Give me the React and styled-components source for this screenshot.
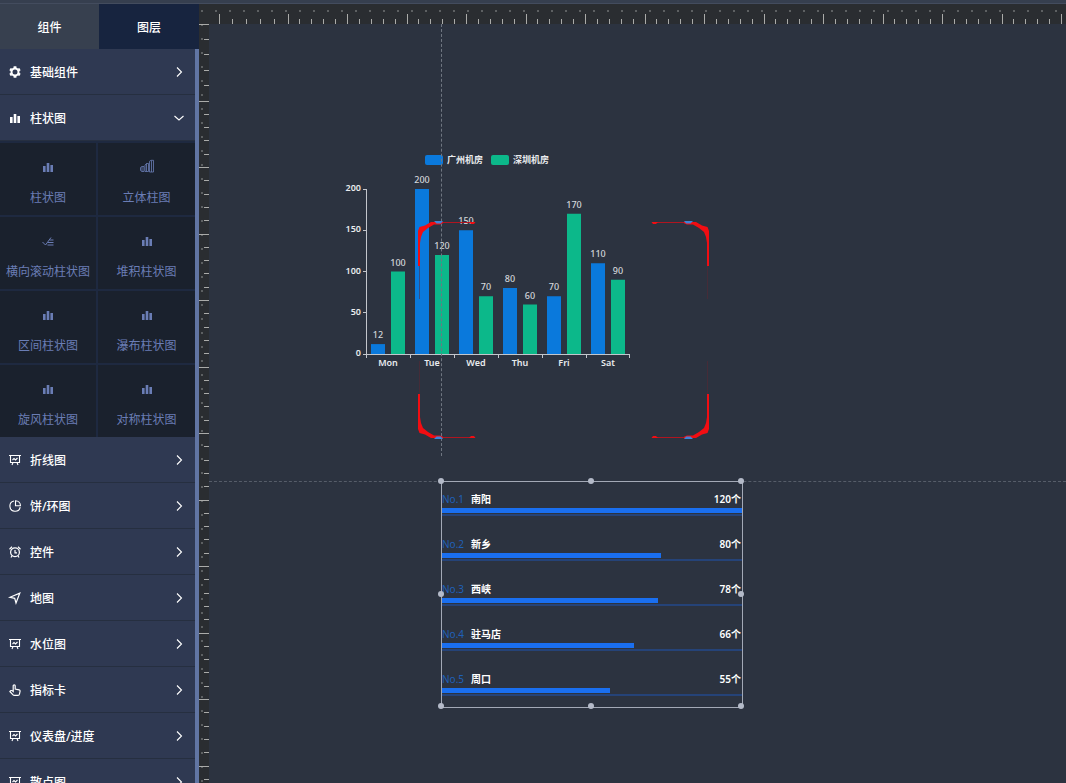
import React, { useState } from 'react';
import styled, { createGlobalStyle } from 'styled-components';

const menus = [
  { name: '基础组件', icon: 'gear' },
  {
    name: '柱状图',
    icon: 'bars',
    children: [
      { name: '柱状图', icon: 'bars' },
      { name: '立体柱图', icon: 'solid' },
      { name: '横向滚动柱状图', icon: 'scroll' },
      { name: '堆积柱状图', icon: 'bars' },
      { name: '区间柱状图', icon: 'bars' },
      { name: '瀑布柱状图', icon: 'bars' },
      { name: '旋风柱状图', icon: 'bars' },
      { name: '对称柱状图', icon: 'bars' },
    ],
  },
  { name: '折线图', icon: 'board' },
  { name: '饼/环图', icon: 'pie' },
  { name: '控件', icon: 'clock' },
  { name: '地图', icon: 'position' },
  { name: '水位图', icon: 'board' },
  { name: '指标卡', icon: 'pointer' },
  { name: '仪表盘/进度', icon: 'board' },
  { name: '散点图', icon: 'board' },
];

const rooms = [
  { day: 'Mon', gz: 12, sz: 100 },
  { day: 'Tue', gz: 200, sz: 120 },
  { day: 'Wed', gz: 150, sz: 70 },
  { day: 'Thu', gz: 80, sz: 60 },
  { day: 'Fri', gz: 70, sz: 170 },
  { day: 'Sat', gz: 110, sz: 90 },
];

const ranks = [
  { city: '南阳', value: 120, percent: 100 },
  { city: '新乡', value: 80, percent: 73 },
  { city: '西峡', value: 78, percent: 72 },
  { city: '驻马店', value: 66, percent: 64 },
  { city: '周口', value: 55, percent: 56 },
];

const handles = ['0% 0%', '50% 0%', '100% 0%', '0% 50%', '100% 50%', '0% 100%', '50% 100%', '100% 100%'];

const shapes = {
  gear: (
    <>
      <circle cx="6" cy="6" r="3.5" fill="none" stroke="currentColor" strokeWidth="2" />
      <path
        d="M6 0.2v2M6 9.800v2M1 3.100l1.600.9M9.400 8l1.600.9M1 8.900l1.600-.9M9.400 4l1.600-.9"
        stroke="currentColor"
        strokeWidth="2.800"
      />
    </>
  ),
  bars: <path d="M1 5h2.6v6H1zM4.7 2h2.6v9H4.7zM8.4 4h2.6v7H8.4z" fill="currentColor" />,
  solid: (
    <g fill="none" stroke="currentColor" strokeWidth="0.8">
      <path d="M-0.5 6.500l1.500-1h2v5h-2l-1.500-1zM1 5.500v5M4 4l1.500-1.500h2v8H4zM5.500 2.500v8M8.500 0.300l1.500-1h2.500v11.700h-4zM10.500 -.5v11.500" />
    </g>
  ),
  scroll: (
    <path d="M0.500 7l3 3L9 2.500M7.500 5h4M6 7.500h5.500M5.500 10h6" fill="none" stroke="currentColor" />
  ),
  board: (
    <path
      d="M0 1.500h12M1.500 1.500v7h9v-7M3.500 6l1.500-1.500 1.500 1.500L8.500 4M4 8.500L3 11M8 8.500L9 11"
      fill="none"
      stroke="currentColor"
      strokeWidth="1.1"
    />
  ),
  pie: (
    <path
      d="M5 1a5.200 5.200 0 1 0 6.200 6.200M6.500 0.700v5h5A5.200 5.200 0 0 0 6.500 0.700z"
      fill="none"
      stroke="currentColor"
      strokeWidth="1.1"
    />
  ),
  clock: (
    <g fill="none" stroke="currentColor" strokeWidth="1.2">
      <circle cx="6" cy="6.300" r="4.400" />
      <path d="M6 4v2.800h2M0.500 3.200L3 .8M11.500 3.200L9 .8M3 9.800l-1 1.700M9 9.800l1 1.700" />
    </g>
  ),
  position: (
    <path d="M1 5.300L10.800 1.200 7 11 5.700 6.300z" fill="none" stroke="currentColor" strokeWidth="1.2" />
  ),
  pointer: (
    <path
      d="M4.200 7.500V1.800a1 1 0 0 1 2 0V5l4 .8c.8.200 1 .6.900 1.300L10.500 10c-.2 1-.6 1.400-1.500 1.400H5.500c-.8 0-1.200-.2-1.700-.8L.9 7.500c.5-1.200 1.700-1.200 2.400-.7z"
      fill="none"
      stroke="currentColor"
      strokeWidth="1.2"
    />
  ),
};

function Icon({ name }) {
  return (
    <svg width="12" height="12" viewBox="0 0 12 12" overflow="visible" aria-hidden="true">
      {shapes[name]}
    </svg>
  );
}

function Chevron({ open }) {
  return (
    <svg width="12" height="12" viewBox="0 0 12 12" fill="none" stroke="currentColor" strokeWidth="1.1" aria-hidden="true">
      <path d={open ? 'M1.500 4L6 8 10.500 4' : 'M4 1.500L8.500 6 4 10.500'} />
    </svg>
  );
}

// the first mark of each ruler is a little wider than the others
function rulerTicks(start, first, step, count) {
  const ticks = [];
  for (let i = 0; i < count; i += 1) {
    const from = i === 0 ? start : start + first + (i - 1) * step;
    const gap = (i === 0 ? first : step) / 5;
    for (let j = 0; j < 5; j += 1) {
      ticks.push({ at: Math.floor(from + j * gap), major: j === 0 });
    }
  }
  return ticks;
}

const topTicks = rulerTicks(20, 69, 59.5, 40);
const sideTicks = rulerTicks(0, 77, 66.5, 30);
const dots = Array.from({ length: 160 }, (_, i) => i * 14);

function TopScale() {
  return (
    <svg width="100%" height="20" aria-hidden="true">
      {dots.map((d) => <rect key={d} x={d + 2} y="6" width="2" height="2" fill="#5d6062" />)}
      {topTicks.map((t) => (
        <rect key={t.at} x={t.at} y={t.major ? 10 : 15} width="1" height={t.major ? 10 : 5} fill="#aaaba9" />
      ))}
    </svg>
  );
}

function SideScale() {
  return (
    <svg width="10" height="100%" aria-hidden="true">
      {dots.map((d) => <rect key={d} x="2" y={d} width="2" height="2" fill="#5d6062" />)}
      {sideTicks.map((t) => (
        <rect key={t.at} x={t.major ? 0 : 5} y={t.at} width={t.major ? 10 : 5} height="1" fill="#aaaba9" />
      ))}
    </svg>
  );
}

function BarChart() {
  const base = 205;
  const left = 27;
  const step = 44;
  const height = (v) => v * 0.825;
  return (
    <ChartSvg width="300" height="224" role="img" aria-label="机房柱状图">
      <rect x="86" y="6" width="18" height="10" rx="2" fill="#0a79dc" />
      <ChartText x="108" y="14" $bold>广州机房</ChartText>
      <rect x="152" y="6" width="18" height="10" rx="2" fill="#0cb88a" />
      <ChartText x="174" y="14" $bold>深圳机房</ChartText>
      {rooms.map((r, i) => {
        const x = left + i * step;
        return (
          <g key={r.day}>
            <rect x={x + 5} y={base - height(r.gz)} width="14" height={height(r.gz)} fill="#0a79dc" />
            <rect x={x + 25} y={base - height(r.sz)} width="14" height={height(r.sz)} fill="#0cb88a" />
            <ChartText x={x + 12} y={base - height(r.gz) - 6} textAnchor="middle">{r.gz}</ChartText>
            <ChartText x={x + 32} y={base - height(r.sz) - 6} textAnchor="middle">{r.sz}</ChartText>
            <ChartText x={x + 22} y={base + 12} textAnchor="middle" $bold>{r.day}</ChartText>
          </g>
        );
      })}
      {[0, 50, 100, 150, 200].map((v) => (
        <g key={v}>
          <rect x={left - 3} y={Math.floor(base - height(v))} width="3" height="1" fill="#c3c6cc" />
          <ChartText x={left - 5} y={base - height(v) + 2} textAnchor="end" $bold>{v}</ChartText>
        </g>
      ))}
      <path d="M27.500 40V205.500H291" fill="none" stroke="#c3c6cc" />
      {[0, 1, 2, 3, 4, 5, 6].map((i) => (
        <rect key={i} x={left + i * step - (i === 6 ? 1 : 0)} y={base} width="1" height="4" fill="#c3c6cc" />
      ))}
    </ChartSvg>
  );
}

function Corner({ transform }) {
  return (
    <g transform={transform}>
      <path d="M0 45V10L1.500 6 7 4.500 13 1H19L25 0.800V2.200L22 3.500H16L10 7 5 11 3 16 2 22V45z" fill="#f20d12" />
      <path d="M25 1.500H57" stroke="#b01520" />
      <path d="M51 1H57.500L56 3H53z" fill="#f20d12" />
      <path d="M16 0H25L23 2.500H18.500z" fill="#3f83d8" />
      <path d="M1.500 45V78" stroke="#5e2630" strokeWidth="0.500" />
    </g>
  );
}

function CornerFrame() {
  return (
    <FrameSvg width="291" height="218" aria-hidden="true">
      <Corner />
      <Corner transform="translate(291 0) scale(-1 1)" />
      <Corner transform="translate(0 218) scale(1 -1)" />
      <Corner transform="translate(291 218) scale(-1 -1)" />
    </FrameSvg>
  );
}

function RankList() {
  return (
    <RankBox>
      <Ranks>
        {ranks.map((r, i) => (
          <Rank key={r.city}>
            <RankLine>
              <RankNo>No.{i + 1}</RankNo>
              <RankCity>{r.city}</RankCity>
              <RankValue>{r.value}个</RankValue>
            </RankLine>
            <RankTrack>
              <RankBar style={{ width: `${r.percent}%` }} />
            </RankTrack>
          </Rank>
        ))}
      </Ranks>
      {handles.map((h) => {
        const [x, y] = h.split(' ');
        return <Handle key={h} style={{ left: x, top: y }} />;
      })}
    </RankBox>
  );
}

export default function App() {
  const [tab, setTab] = useState('组件');
  const [opened, setOpened] = useState('柱状图');

  return (
    <Page>
      <GlobalStyle />
      <TopStrip />
      <Main>
        <Sidebar>
          <Tabs>
            {['组件', '图层'].map((t) => (
              <Tab key={t} type="button" $active={tab === t} onClick={() => setTab(t)}>{t}</Tab>
            ))}
          </Tabs>
          <MenuScroll>
            {menus.map((m) => (
              <React.Fragment key={m.name}>
                <MenuItem
                  type="button"
                  aria-expanded={opened === m.name}
                  onClick={() => setOpened(opened === m.name ? '' : m.name)}
                >
                  <Icon name={m.icon} />
                  <MenuName>{m.name}</MenuName>
                  <Chevron open={opened === m.name} />
                </MenuItem>
                {m.children && opened === m.name && (
                  <CellGrid>
                    {m.children.map((c) => (
                      <Cell key={c.name} type="button">
                        <Icon name={c.icon} />
                        <span>{c.name}</span>
                      </Cell>
                    ))}
                  </CellGrid>
                )}
              </React.Fragment>
            ))}
          </MenuScroll>
        </Sidebar>
        <Editor>
          <TopRuler><TopScale /></TopRuler>
          <SideRuler><SideScale /></SideRuler>
          <Canvas>
            <BarChart />
            <GuideX />
            <GuideY />
            <CornerFrame />
            <RankList />
          </Canvas>
        </Editor>
      </Main>
    </Page>
  );
}

const GlobalStyle = createGlobalStyle`
  * {
    box-sizing: border-box;
  }
  body {
    margin: 0;
    overflow: hidden;
    background: #2c3340;
    font-family: 'Noto Sans', 'Noto Sans CJK SC', sans-serif;
    font-size: 12px;
    color: #ffffff;
  }
  button {
    border: 0;
    padding: 0;
    font: inherit;
    color: inherit;
    cursor: pointer;
  }
  svg {
    display: block;
    flex-shrink: 0;
  }
`;
const Page = styled.div`
  display: flex;
  flex-direction: column;
  height: 100vh;
`;
const TopStrip = styled.header`
  height: 4px;
  flex-shrink: 0;
  background: #363f4f;
  border-bottom: 1px solid #434c5e;
`;
const Main = styled.main`
  display: flex;
  flex: 1;
  min-height: 0;
`;
const Sidebar = styled.aside`
  display: flex;
  flex-direction: column;
  width: 199px;
  flex-shrink: 0;
`;
const Tabs = styled.div`
  display: grid;
  grid-template-columns: 99px 1fr;
  height: 45px;
  flex-shrink: 0;
`;
const Tab = styled.button`
  background: ${({ $active }) => ($active ? '#37404f' : '#17243f')};
  font-weight: 500;
`;
const MenuScroll = styled.nav`
  flex: 1;
  min-height: 0;
  overflow: hidden;
  background: #2f3952;
  border-right: 4px solid #6175a3;
`;
const MenuItem = styled.button`
  display: flex;
  align-items: center;
  gap: 9px;
  width: 100%;
  height: 46px;
  padding: 0 10px 0 9px;
  background: #2f3952;
  border-bottom: 1px solid #262f40;
  font-weight: 500;
  text-align: left;
`;
const MenuName = styled.span`
  flex: 1;
`;
const CellGrid = styled.div`
  display: grid;
  grid-template-columns: 96px 1fr;
  gap: 2px;
  padding-top: 2px;
  background: #1e2940;
`;
const Cell = styled.button`
  display: flex;
  flex-direction: column;
  align-items: center;
  justify-content: center;
  gap: 16px;
  height: 72px;
  padding-top: 10px;
  background: #1a212d;
  color: #6a7db5;
  line-height: 18px;
  white-space: nowrap;
`;
const Editor = styled.section`
  display: grid;
  grid-template-columns: 10px 1fr;
  grid-template-rows: 20px 1fr;
  flex: 1;
  min-width: 0;
`;
const TopRuler = styled.div`
  grid-column: 1 / 3;
  overflow: hidden;
  background: #2a2d31;
`;
const SideRuler = styled.div`
  min-height: 0;
  overflow: hidden;
  background: #2a2d31;
`;
const Canvas = styled.div`
  position: relative;
  min-height: 0;
  overflow: hidden;
  background: #2c3340;
`;
// widgets are dropped freely on the canvas, so each one has its own place
const ChartSvg = styled.svg`
  position: absolute;
  left: 130px;
  top: 125px;
`;
const ChartText = styled.text`
  font-size: 9px;
  font-weight: ${({ $bold }) => ($bold ? 600 : 500)};
  fill: ${({ $bold }) => ($bold ? '#e9ebee' : '#d3d6da')};
`;
const FrameSvg = styled.svg`
  position: absolute;
  left: 209px;
  top: 197px;
`;
const GuideX = styled.div`
  position: absolute;
  left: 232px;
  top: 0;
  height: 432px;
  border-left: 1px dashed #6f7681;
`;
const GuideY = styled.div`
  position: absolute;
  left: 0;
  right: 0;
  top: 457px;
  border-top: 1px dashed #565d69;
`;
const RankBox = styled.div`
  position: absolute;
  left: 232px;
  top: 457px;
  width: 302px;
  height: 227px;
  border: 1px solid #a3a9b6;
`;
const Ranks = styled.ol`
  list-style: none;
  margin: 0;
  padding: 9px 0 0;
`;
const Rank = styled.li`
  height: 45px;
`;
const RankLine = styled.div`
  display: flex;
  height: 17px;
  line-height: 16px;
  font-size: 10px;
`;
const RankNo = styled.span`
  width: 29px;
  color: #2060b8;
`;
const RankCity = styled.span`
  flex: 1;
  font-weight: 700;
`;
const RankValue = styled.span`
  margin-right: 1px;
  font-weight: 600;
`;
const RankTrack = styled.div`
  height: 8px;
  border-bottom: 2px solid #254378;
`;
const RankBar = styled.div`
  height: 5px;
  background: #1a6ff0;
`;
const Handle = styled.i`
  position: absolute;
  width: 6px;
  height: 6px;
  margin: -4px;
  border-radius: 50%;
  background: #b4bac8;
`;
